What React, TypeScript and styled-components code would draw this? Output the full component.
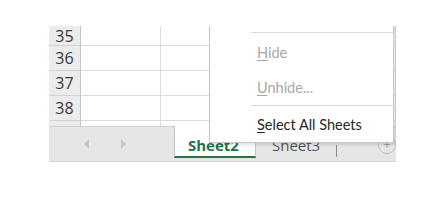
import React from "react";
import styled, { createGlobalStyle } from "styled-components";

const GlobalStyle = createGlobalStyle`
  html, body { margin: 0; padding: 0; background: #ffffff; }
  body { font-family: "Lato", "Open Sans", sans-serif; }
`;

const Page = styled.div`
  padding: 26px 0 0 49px;
`;

const Window = styled.div`
  position: relative;
  width: 347px;
  height: 136px;
  overflow: hidden;
  display: flex;
  flex-direction: column;
  background: #ffffff;
`;

const GridArea = styled.div`
  height: 100px;
  overflow: hidden;
  flex: none;
`;

const Grid = styled.div`
  display: grid;
  grid-template-columns: 32px 80px 1fr;
  grid-template-rows: 20px repeat(4, 25px);
`;

const RowHead = styled.div`
  box-sizing: border-box;
  background: #ececec;
  border-right: 1px solid #c4c4c4;
  border-bottom: 1px solid #d2d2d2;
  color: #3a3a3a;
  font-family: "Open Sans", sans-serif;
  font-size: 16px;
  line-height: 21px;
  padding-top: 1px;
  text-align: center;
  overflow: hidden;
  display: flex;
  align-items: center;
  justify-content: center;
`;

const Cell = styled.div`
  box-sizing: border-box;
  border-right: 1px solid #dcdcdc;
  border-bottom: 1px solid #dcdcdc;
`;

const TabBar = styled.div`
  box-sizing: border-box;
  height: 36px;
  flex: none;
  display: flex;
  align-items: stretch;
  background: #e6e6e6;
  border-top: 1px solid #cfcfcf;
  border-bottom: 1px solid #d6d6d6;
`;

const Nav = styled.div`
  width: 125px;
  display: flex;
  align-items: center;
  gap: 28px;
  padding-left: 34px;
  box-sizing: border-box;
`;

const Arrow = styled.svg`
  width: 8px;
  height: 10px;
  display: block;
`;

const Tab = styled.div<{ $active?: boolean }>`
  box-sizing: border-box;
  width: ${(p) => (p.$active ? "82px" : "80px")};
  margin-top: -1px;
  padding: 9px 0 0 ${(p) => (p.$active ? "13px" : "16px")};
  background: ${(p) => (p.$active ? "#ffffff" : "transparent")};
  border-left: ${(p) => (p.$active ? "1px solid #c4c4c4" : "none")};
  border-right: ${(p) => (p.$active ? "1px solid #c4c4c4" : "none")};
  border-bottom: ${(p) => (p.$active ? "2px solid #217346" : "none")};
  height: ${(p) => (p.$active ? "32px" : "35px")};
  color: ${(p) => (p.$active ? "#217346" : "#555555")};
  font-family: "Open Sans", sans-serif;
  font-weight: ${(p) => (p.$active ? 700 : 400)};
  font-size: 15px;
  line-height: 20px;
  white-space: nowrap;
`;

const TabDivider = styled.div`
  width: 1px;
  background: #8a8a8a;
  margin: 18px 0 4px;
`;

const AddWrap = styled.div`
  flex: 1;
  display: flex;
  align-items: center;
  justify-content: flex-end;
  padding-top: 1px;
`;

const AddButton = styled.div`
  box-sizing: border-box;
  width: 18px;
  height: 18px;
  border-radius: 50%;
  border: 1px solid #c0c0c0;
  color: #a0a0a0;
  font-size: 13px;
  line-height: 15px;
  text-align: center;
  font-family: "Open Sans", sans-serif;
`;

const Menu = styled.div`
  position: absolute;
  left: 160px;
  bottom: 19px;
  width: 185px;
  box-sizing: border-box;
  background: #ffffff;
  border: 1px solid #c6c6c6;
  box-shadow: 2px 2px 3px rgba(0, 0, 0, 0.12);
  display: flex;
  flex-direction: column;
`;

const MenuItem = styled.div<{ $disabled?: boolean; $h?: number }>`
  height: ${(p) => p.$h ?? 35}px;
  display: flex;
  align-items: center;
  padding-left: 47px;
  font-family: "Lato", "Open Sans", sans-serif;
  font-size: 14.5px;
  color: ${(p) => (p.$disabled ? "#a8a8a8" : "#262626")};
  white-space: nowrap;

  u {
    text-decoration: underline;
    text-underline-offset: 2px;
    text-decoration-thickness: 1px;
  }
`;

const Separator = styled.div<{ $mb?: number }>`
  height: 1px;
  background: #d7d7d7;
  margin: 0 0 ${(p) => p.$mb ?? 0}px 41px;
`;

const rows: (number | null)[] = [35, 36, 37, 38, null];

export default function App() {
  return (
    <>
      <GlobalStyle />
      <Page>
        <Window>
          <GridArea>
            <Grid>
              {rows.map((r, i) => (
                <React.Fragment key={i}>
                  <RowHead>{r}</RowHead>
                  <Cell />
                  <Cell />
                </React.Fragment>
              ))}
            </Grid>
          </GridArea>
          <TabBar>
            <Nav>
              <Arrow viewBox="0 0 8 10">
                <path d="M6 0 L1 5 L6 10 Z" fill="#c4c4c4" />
              </Arrow>
              <Arrow viewBox="0 0 8 10">
                <path d="M2 0 L7 5 L2 10 Z" fill="#c4c4c4" />
              </Arrow>
            </Nav>
            <Tab $active>Sheet2</Tab>
            <Tab>Sheet3</Tab>
            <TabDivider />
            <AddWrap>
              <AddButton>+</AddButton>
            </AddWrap>
          </TabBar>
          <Menu>
            <MenuItem />
            <Separator $mb={2} />
            <MenuItem $disabled>
              <span>
                <u>H</u>ide
              </span>
            </MenuItem>
            <MenuItem $disabled>
              <span>
                <u>U</u>nhide...
              </span>
            </MenuItem>
            <Separator />
            <MenuItem $h={36}>
              <span>
                <u>S</u>elect All Sheets
              </span>
            </MenuItem>
          </Menu>
        </Window>
      </Page>
    </>
  );
}
